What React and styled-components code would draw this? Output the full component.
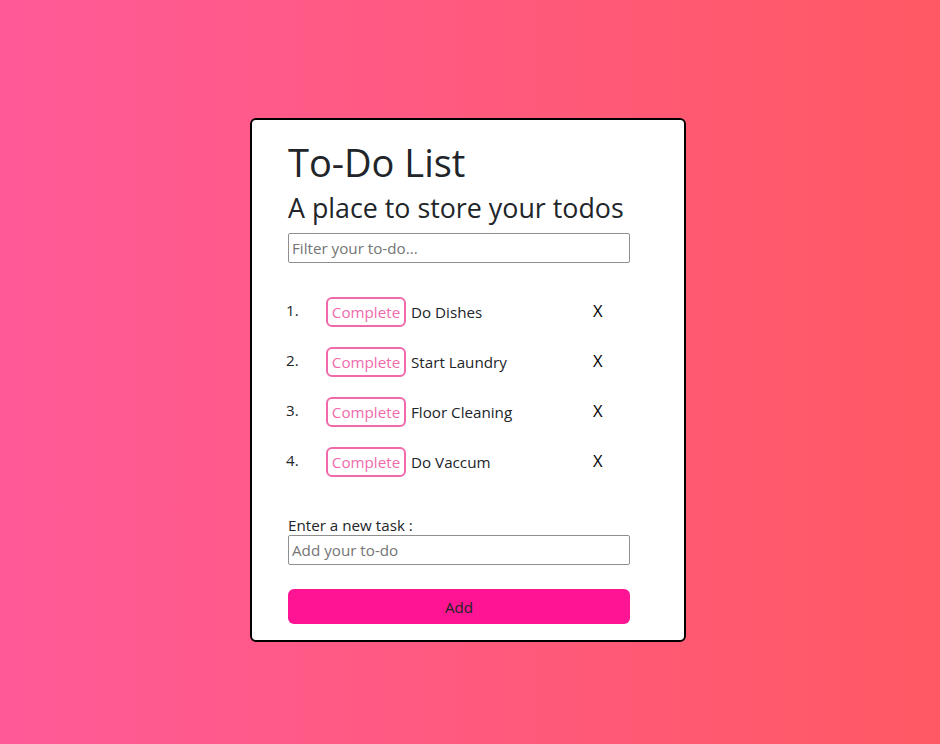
import React from "react";
import styled, { createGlobalStyle } from "styled-components";

const Global = createGlobalStyle`
  html, body { margin: 0; padding: 0; }
  body {
    font-family: "Open Sans", "Noto Sans", sans-serif;
    color: #212529;
  }
  * { box-sizing: border-box; }
`;

const Page = styled.div`
  width: 940px;
  height: 744px;
  background: linear-gradient(to right, #ff5a98, #ff5964);
  display: flex;
  justify-content: center;
  align-items: flex-start;
  padding-top: 118px;
  padding-right: 4px;
`;

const Card = styled.div`
  width: 436px;
  background: #fff;
  border: 2px solid #000;
  border-radius: 6px;
  padding: 18px 36px 16px 36px;
  display: flex;
  flex-direction: column;
  align-items: flex-start;
  & > * { flex-shrink: 0; }
`;

const Title = styled.h1`
  margin: 0;
  font-size: 38px;
  font-weight: 400;
  line-height: 48px;
  white-space: nowrap;
`;

const Subtitle = styled.h2`
  margin: 4px 0 0 0;
  font-size: 26.8px;
  font-weight: 400;
  line-height: 36px;
  white-space: nowrap;
`;

const TextInput = styled.input`
  width: 342px;
  height: 30px;
  border: 1px solid #8f8f8f;
  border-radius: 2px;
  font-family: inherit;
  font-size: 15.2px;
  color: #212529;
  padding: 0 3px;
  margin: ${(p) => p.$top || 0}px 0 0 0;
  &::placeholder { color: #757575; }
`;

const List = styled.ol`
  list-style: none;
  margin: 34px 0 0 0;
  padding: 0;
  display: flex;
  flex-direction: column;
  gap: 20px;
`;

const Row = styled.li`
  display: flex;
  align-items: center;
  height: 30px;
`;

const Num = styled.span`
  width: 40px;
  margin-left: -2px;
  font-size: 15.2px;
  line-height: 20px;
  align-self: flex-start;
  margin-top: 3px;
`;

const CompleteBtn = styled.button`
  height: 30px;
  width: 80px;
  border: 2px solid #f06aab;
  border-radius: 6px;
  background: #fff;
  color: #f06aab;
  font-family: inherit;
  font-size: 15.2px;
  padding: 0;
`;

const Task = styled.span`
  margin-left: 5px;
  font-size: 15.2px;
  width: 182px;
`;

const Remove = styled.span`
  font-size: 16.5px;
  line-height: 20px;
  color: #000;
  align-self: flex-start;
  margin-top: 4px;
`;

const Label = styled.label`
  margin-top: 39px;
  font-size: 15.2px;
  line-height: 18px;
`;

const AddBtn = styled.button`
  margin-top: 24px;
  width: 342px;
  height: 35px;
  border: none;
  border-radius: 6px;
  background: #ff1493;
  color: #212529;
  font-family: inherit;
  font-size: 15.2px;
`;

const todos = ["Do Dishes", "Start Laundry", "Floor Cleaning", "Do Vaccum"];

export default function App() {
  return (
    <Page>
      <Global />
      <Card>
        <Title>To-Do List</Title>
        <Subtitle>A place to store your todos</Subtitle>
        <TextInput $top={7} placeholder="Filter your to-do..." />
        <List>
          {todos.map((t, i) => (
            <Row key={t}>
              <Num>{i + 1}.</Num>
              <CompleteBtn>Complete</CompleteBtn>
              <Task>{t}</Task>
              <Remove>X</Remove>
            </Row>
          ))}
        </List>
        <Label>Enter a new task :</Label>
        <TextInput $top={1} placeholder="Add your to-do" />
        <AddBtn>Add</AddBtn>
      </Card>
    </Page>
  );
}
